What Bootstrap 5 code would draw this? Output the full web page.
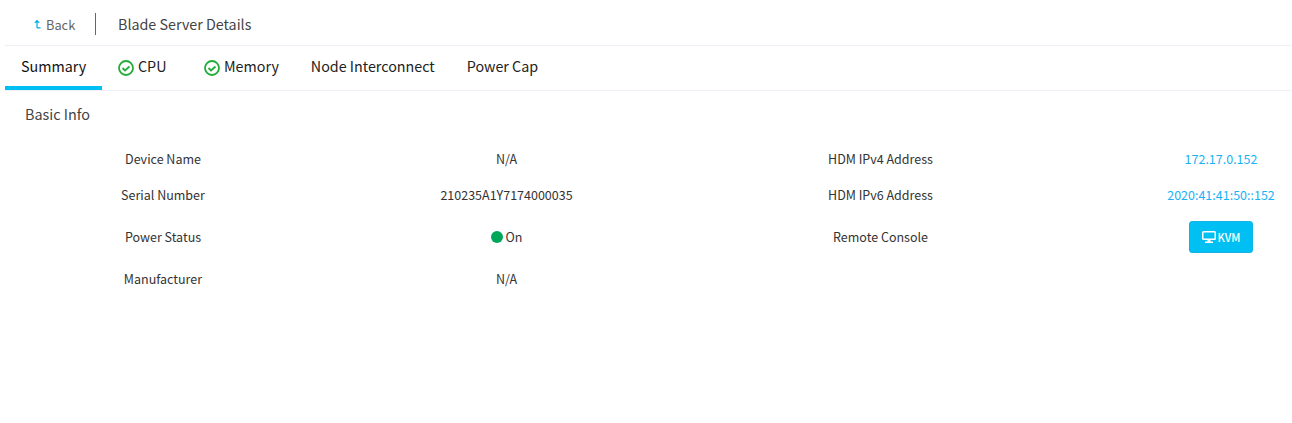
<!DOCTYPE html>
<html>
<head>
  <meta charset="utf-8">
  <title>Blade Server Details</title>
  <link href="https://cdn.jsdelivr.net/npm/bootstrap@5.3.2/dist/css/bootstrap.min.css" rel="stylesheet">
  <style>
    body { font-family: "Noto Sans CJK SC", "Noto Sans", sans-serif; background: #fff; color: #333; overflow: hidden; }
    .page-wrap { padding: 0 1px 0 5px; }
    .top-bar { height: 46px; border-bottom: 1px solid #eeeef6; padding: 3px 0 0 28px; }
    .back-link { color: #666; font-size: 12.8px; text-decoration: none; width: 62px; margin-top: 2px; }
    .back-link svg { margin: -2px 4px 0 0; }
    .top-sep { width: 1px; height: 22px; background: #666; }
    .page-title { font-size: 14.3px; color: #444; margin-left: 22px; }
    .tab-bar { height: 45px; border-bottom: 1px solid #eeeef6; }
    .tab-item { font-size: 14.3px; color: #222; height: 44px; padding: 0 16px; border-bottom: 4px solid transparent; }
    .tab-item svg { margin: 3px 4px 0 0; }
    .tab-cpu { margin-right: 5.5px; }
    .tab-active { border-bottom-color: #00bff3; color: #111; width: 97px; }
    .sec-title { font-size: 14.4px; color: #444; padding: 12px 0 0 20px; height: 50px; }
    .info-grid { display: grid; grid-template-columns: 276px 411px 439px 140px; grid-template-rows: 36px 36px 48px 36px; margin-left: 20px; font-size: 12.5px; color: #333; text-align: center; }
    .info-grid > div { display: flex; align-items: center; justify-content: center; }
    .info-grid > .label-c { padding-right: 102px; }
    .ip-link { color: #1ab2f5; text-decoration: none; }
    .on-dot { width: 12px; height: 12px; border-radius: 50%; background: #00a65a; margin-right: 3px; }
    .kvm-btn { background: #00bff3; color: #fff; border: 1px solid #12b5e6; font-size: 11px; font-weight: 500; width: 64px; height: 32px; padding: 0; border-radius: 3px; }
    .kvm-btn svg { margin-right: 2px; }
  </style>
</head>
<body>
  <div class="page-wrap">
    <div class="top-bar d-flex align-items-center">
      <a class="back-link d-flex align-items-center" href="#">
        <svg width="9" height="10" viewBox="0 0 9 10" fill="none" stroke="#00a8ec" stroke-width="1.200"><path d="M4 9V1.500M1.800 3.800L4 1.500l2.200 2.300M4 8.800H7.500"/></svg>
        Back
      </a>
      <span class="top-sep"></span>
      <span class="page-title">Blade Server Details</span>
    </div>
    <div class="tab-bar d-flex">
      <div class="tab-item tab-active d-flex align-items-center">Summary</div>
      <div class="tab-item tab-cpu d-flex align-items-center">
        <svg width="16" height="16" viewBox="0 0 16 16" fill="none" stroke="#22ac38" stroke-width="1.800"><circle cx="8" cy="8" r="7"/><path d="M4.500 8l2.500 2.500 4.500-4"/></svg>CPU
      </div>
      <div class="tab-item d-flex align-items-center">
        <svg width="16" height="16" viewBox="0 0 16 16" fill="none" stroke="#22ac38" stroke-width="1.800"><circle cx="8" cy="8" r="7"/><path d="M4.500 8l2.500 2.500 4.500-4"/></svg>Memory
      </div>
      <div class="tab-item d-flex align-items-center">Node Interconnect</div>
      <div class="tab-item d-flex align-items-center">Power Cap</div>
    </div>
    <div class="sec-title">Basic Info</div>
    <div class="info-grid">
      <div>Device Name</div>
      <div>N/A</div>
      <div class="label-c">HDM IPv4 Address</div>
      <div><a class="ip-link" href="#">172.17.0.152</a></div>
      <div>Serial Number</div>
      <div>210235A1Y7174000035</div>
      <div class="label-c">HDM IPv6 Address</div>
      <div><a class="ip-link" href="#">2020:41:41:50::152</a></div>
      <div>Power Status</div>
      <div><span class="on-dot"></span>On</div>
      <div class="label-c">Remote Console</div>
      <div>
        <button class="btn kvm-btn d-inline-flex align-items-center justify-content-center">
          <svg width="14" height="12" viewBox="0 0 14 12" fill="#fff"><path d="M1.500 0h11A1.500 1.500 0 0 1 14 1.500v6A1.500 1.500 0 0 1 12.500 9H8.500v1.500H11V12H3v-1.500h2.500V9h-4A1.500 1.500 0 0 1 0 7.500v-6A1.500 1.500 0 0 1 1.500 0zM1.500 1.500v6h11v-6z"/></svg>KVM
        </button>
      </div>
      <div>Manufacturer</div>
      <div>N/A</div>
    </div>
  </div>
</body>
</html>
